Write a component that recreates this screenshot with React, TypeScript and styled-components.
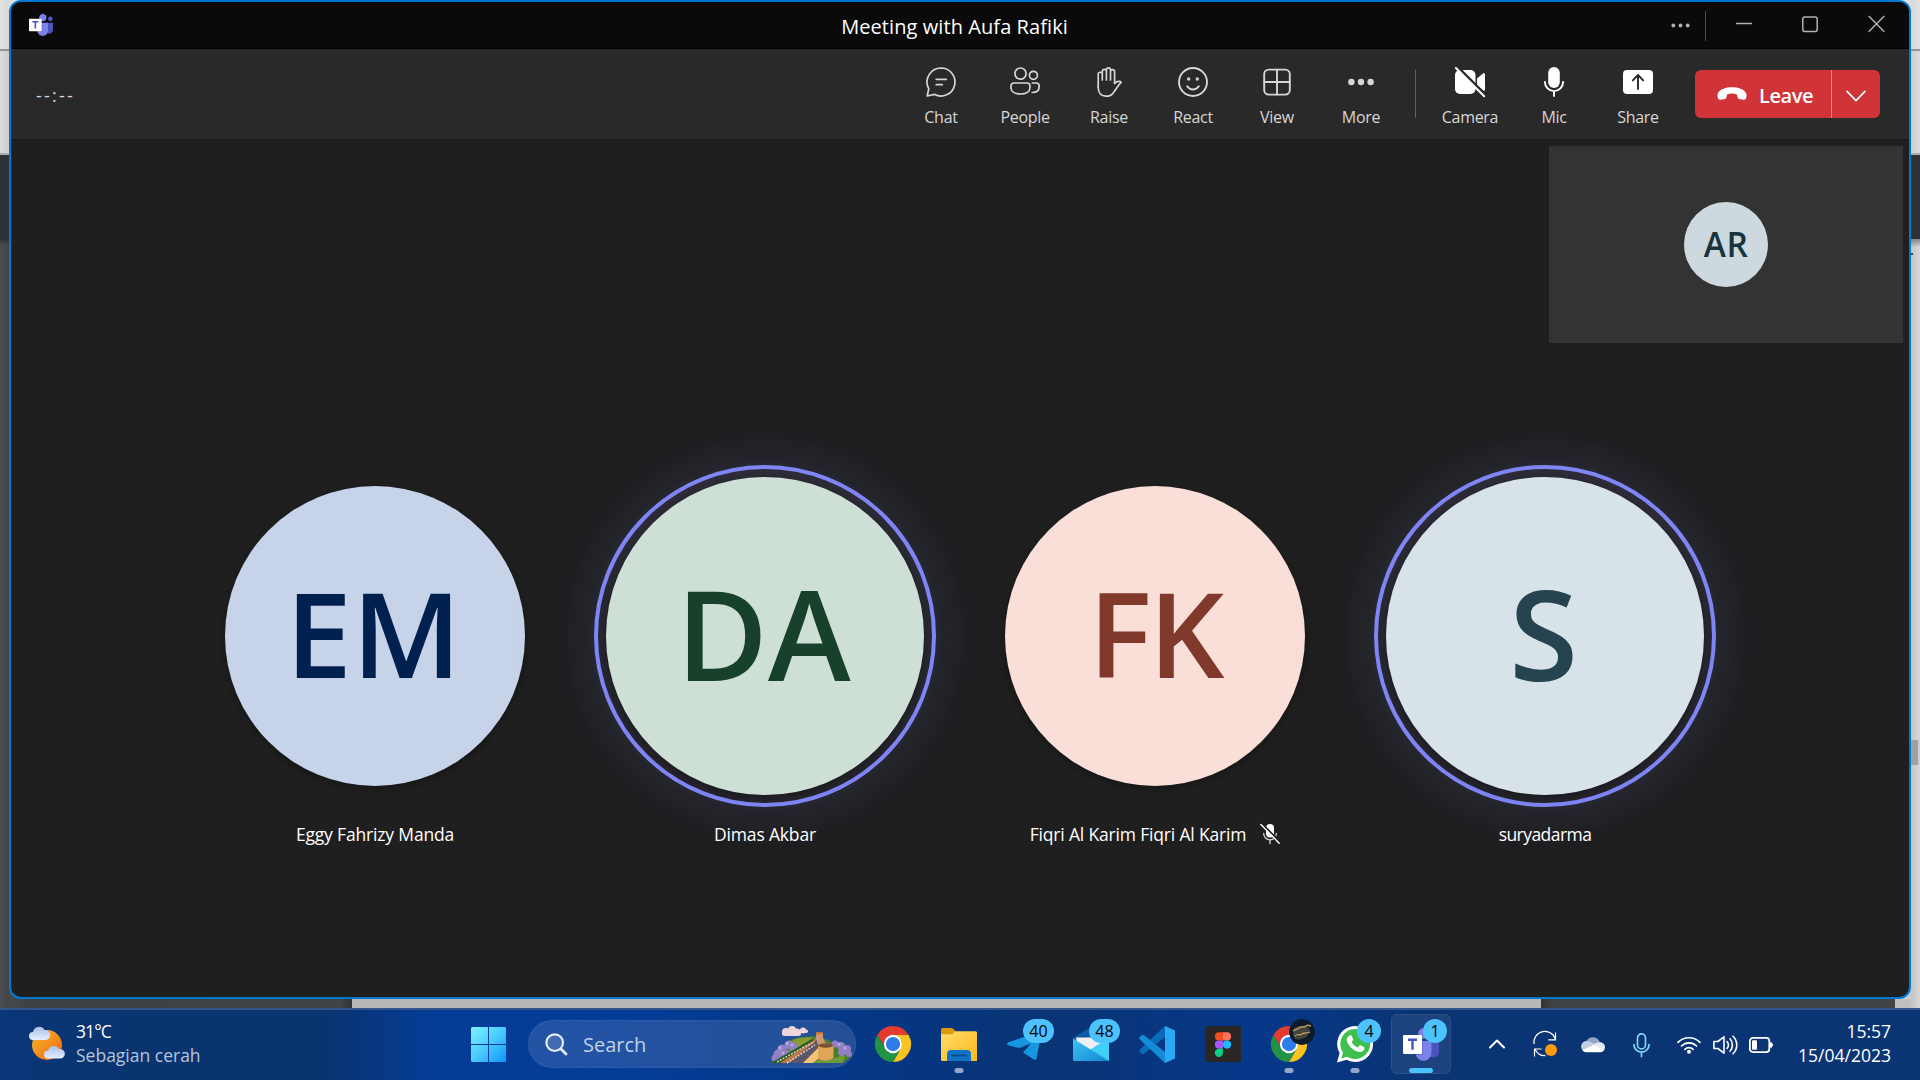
import React from "react";
import styled, { createGlobalStyle, css } from "styled-components";

const UI_FONT = `"Open Sans", "Noto Sans", sans-serif`;

const GlobalStyle = createGlobalStyle`
  * { box-sizing: border-box; }
  html, body { margin: 0; padding: 0; background: #0b3572; overflow: hidden; }
  body { font-family: ${UI_FONT}; }
  svg { display: block; flex: none; overflow: visible; }
`;

/* ---------- desktop ---------- */

const Screen = styled.div`
  width: 1920px;
  height: 1080px;
  display: flex;
  flex-direction: column;
  overflow: hidden;
`;

const Desktop = styled.div`
  height: 1008px;
  display: grid;
  grid-template-columns: 9px 1902px 9px;
`;

const Strip = styled.div`
  display: flex;
  flex-direction: column;
`;

const Band = styled.div<{ $h?: number; $bg: string }>`
  ${(p) => (p.$h ? css`height: ${p.$h}px; flex: none;` : css`flex: 1;`)}
  background: ${(p) => p.$bg};
`;

const ScrollThumb = styled.div`
  width: 7px;
  height: 25px;
  background: #a0a0a0;
`;

const ScrollArrow = styled.div`
  width: 2px;
  height: 2px;
  margin-top: 14px;
  background: #45494c;
`;

const Middle = styled.div`
  display: flex;
  flex-direction: column;
  background: linear-gradient(90deg, transparent 50%, #cbcbcb 50%) 0 900px no-repeat,
    linear-gradient(#dedede 100px, #45494c 100px);
`;

const Below = styled.div`
  height: 9px;
  display: flex;
`;

const BelowPart = styled.div<{ $w?: number; $bg: string }>`
  ${(p) => (p.$w ? css`width: ${p.$w}px;` : css`flex: 1;`)}
  background: ${(p) => p.$bg};
`;

/* ---------- meeting window ---------- */

const Window = styled.div`
  height: 999px;
  border: 2px solid #0078d4;
  border-radius: 12px;
  background: #1f1f1f;
  display: flex;
  flex-direction: column;
  overflow: hidden;
`;

const TitleBar = styled.div`
  height: 47px;
  flex: none;
  background: #0a0a0a;
  border-bottom: 1px solid #000;
  display: grid;
  grid-template-columns: 1fr auto 1fr;
  align-items: center;
  padding: 0 24px 0 18px;
`;

const TitleLogo = styled.div`
  padding-bottom: 1px;
`;

const Title = styled.div`
  color: #fff;
  font-size: 20px;
  line-height: 26px;
  letter-spacing: 0.08px;
  padding-top: 3px;
  margin-left: -5px;
`;

const WindowControls = styled.div`
  display: flex;
  justify-content: flex-end;
  align-items: center;
  height: 46px;
  padding-bottom: 1px;
`;

const ControlDivider = styled.div`
  width: 1px;
  height: 30px;
  background: #4d4d4d;
  margin: 3px 30px 0 15px;
`;

const ControlGap = styled.div<{ $w: number }>`
  width: ${(p) => p.$w}px;
`;

const Toolbar = styled.div`
  height: 90px;
  flex: none;
  background: #292929;
  display: flex;
  padding: 0 29px 0 25px;
  box-shadow: 0 1px 1px #1a1a1a;
`;

const Timer = styled.div`
  flex: 1;
  color: #d6d6d6;
  font-size: 18px;
  line-height: 24px;
  letter-spacing: 2.2px;
  padding-top: 34px;
`;

const Tool = styled.div`
  width: 84px;
  padding-top: 18px;
  display: flex;
  flex-direction: column;
  align-items: center;
`;

const ToolLabel = styled.div`
  color: #d6d6d6;
  font-size: 16px;
  line-height: 22px;
  letter-spacing: -0.3px;
  margin-top: 9px;
`;

const ToolDivider = styled.div`
  width: 1px;
  height: 48px;
  background: #616161;
  margin: 21px 12px 0;
`;

const LeaveGroup = styled.div`
  display: flex;
  width: 185px;
  height: 48px;
  margin: 21px 0 0 15px;
  border-radius: 6px;
  background: #d13438;
  overflow: hidden;
`;

const LeaveMain = styled.div`
  width: 136px;
  display: flex;
  align-items: center;
  padding-left: 22px;
  gap: 12px;
`;

const LeaveText = styled.div`
  color: #fff;
  font-weight: 600;
  font-size: 20px;
  line-height: 26px;
  letter-spacing: -0.4px;
  padding-top: 3px;
`;

const LeaveMenu = styled.div`
  flex: 1;
  border-left: 1px solid #e38a8c;
  display: flex;
  align-items: center;
  justify-content: center;
  padding-top: 3px;
`;

const Stage = styled.div`
  flex: 1;
  position: relative;
  padding: 326px 169px 0;
`;

const SelfPreview = styled.div`
  position: absolute;
  top: 7px;
  right: 6px;
  width: 354px;
  height: 197px;
  background: #333;
  display: flex;
  align-items: center;
  justify-content: center;
`;

const SelfAvatar = styled.div`
  width: 84px;
  height: 85px;
  border-radius: 50%;
  background: #ced9df;
  color: #17343a;
  font-weight: 600;
  font-size: 33.5px;
  line-height: 84px;
  text-align: center;
  letter-spacing: 0.4px;
`;

const People = styled.div`
  display: grid;
  grid-template-columns: repeat(4, 390px);
`;

const Person = styled.div`
  display: flex;
  flex-direction: column;
  align-items: center;
`;

const Ring = styled.div<{ $on?: boolean }>`
  width: 342px;
  height: 342px;
  border-radius: 50%;
  display: flex;
  align-items: center;
  justify-content: center;
  ${(p) =>
    p.$on &&
    css`
      border: 4.5px solid #7f85f5;
      background: linear-gradient(#2c2b37, #25242b);
      box-shadow: 0 0 48px 4px rgba(127, 133, 245, 0.11), 0 0 110px 10px rgba(127, 110, 190, 0.05);
    `}
`;

const Avatar = styled.div<{ $bg: string; $fg: string; $big?: boolean; $tight?: boolean }>`
  width: ${(p) => (p.$big ? 318 : 300)}px;
  height: ${(p) => (p.$big ? 318 : 300)}px;
  flex: none;
  border-radius: 50%;
  background: ${(p) => p.$bg};
  color: ${(p) => p.$fg};
  display: flex;
  align-items: center;
  justify-content: center;
  font-weight: 600;
  font-size: ${(p) => (p.$big ? 125 : 118.5)}px;
  line-height: 1;
  letter-spacing: ${(p) => (p.$tight ? "-3px" : "0")};
  padding: 0 ${(p) => (p.$tight ? 0 : 3)}px 8px 0;
  box-shadow: 0 3px 7px rgba(0, 0, 0, 0.3);
`;

const NameRow = styled.div`
  display: flex;
  align-items: center;
  gap: 14px;
  height: 24px;
  margin-top: 15px;
`;

const Name = styled.div<{ $tight?: boolean }>`
  color: #fff;
  font-size: 17.5px;
  line-height: 24px;
  letter-spacing: ${(p) => (p.$tight ? -0.55 : -0.17)}px;
  white-space: nowrap;
`;

/* ---------- taskbar ---------- */

const Taskbar = styled.div`
  height: 72px;
  flex: none;
  border-top: 2px solid #33558b;
  background: linear-gradient(
    90deg,
    #0a3778 0,
    #0a3470 130px,
    #0a3470 330px,
    #043c96 430px,
    #043c98 600px,
    #053786 860px,
    #0a3474 1050px,
    #06388a 1260px,
    #0a3473 1420px,
    #0a3474 1920px
  );
  display: flex;
  align-items: center;
`;

const Weather = styled.div`
  width: 449px;
  padding-left: 29px;
  display: flex;
  align-items: center;
  gap: 11px;
`;

const WeatherText = styled.div`
  display: flex;
  flex-direction: column;
  color: #b7c5da;
  font-size: 17.5px;
  line-height: 24px;
  padding-bottom: 4px;
`;

const Degrees = styled.div`
  color: #fff;
  letter-spacing: -0.9px;
`;

const StartButton = styled.div`
  width: 79px;
  display: flex;
  justify-content: center;
  padding: 0 0 1px;
`;

const SearchPill = styled.div`
  width: 328px;
  height: 48px;
  margin: 0 1px 2px 0;
  border-radius: 24px;
  background: rgba(255, 255, 255, 0.12);
  border: 1px solid rgba(255, 255, 255, 0.05);
  display: flex;
  align-items: center;
  padding: 0 2px 0 16px;
`;

const SearchText = styled.div`
  flex: 1;
  color: #c3d0e6;
  font-size: 20px;
  line-height: 28px;
  padding: 1px 0 0 15px;
`;

const Apps = styled.div`
  display: flex;
  gap: 6px;
  padding-left: 6px;
`;

const AppTile = styled.div<{ $active?: boolean }>`
  position: relative;
  width: 60px;
  height: 60px;
  margin-bottom: 2px;
  border-radius: 6px;
  display: flex;
  align-items: center;
  justify-content: center;
  ${(p) =>
    p.$active &&
    css`
      background: rgba(255, 255, 255, 0.08);
      border: 1px solid rgba(255, 255, 255, 0.07);
    `}
`;

const Indicator = styled.div<{ $wide?: boolean }>`
  position: absolute;
  left: 50%;
  bottom: ${(p) => (p.$wide ? 0 : 1)}px;
  transform: translateX(-50%);
  width: ${(p) => (p.$wide ? 24 : 9)}px;
  height: 5px;
  border-radius: 3px;
  background: ${(p) => (p.$wide ? "#4cc2ff" : "#94a7c9")};
`;

const Badge = styled.div<{ $wide?: boolean; $active?: boolean }>`
  position: absolute;
  top: ${(p) => (p.$active ? 4 : 5)}px;
  left: ${(p) => (p.$wide ? 28 : p.$active ? 31 : 32)}px;
  width: ${(p) => (p.$wide ? 31 : 24)}px;
  height: 24px;
  border-radius: 12px;
  background: #4cc2ff;
  color: #000;
  font-size: 16px;
  line-height: 25px;
  text-align: center;
`;

const ProfilePic = styled.div`
  position: absolute;
  top: 5px;
  left: 30px;
  width: 26px;
  height: 26px;
  border-radius: 50%;
  overflow: hidden;
`;

const Tray = styled.div`
  flex: 1;
  display: flex;
  align-items: center;
  padding: 0 29px 1px 38px;
`;

const TrayCell = styled.div<{ $w: number }>`
  width: ${(p) => p.$w}px;
  display: flex;
  justify-content: center;
`;

const Clock = styled.div`
  flex: 1;
  color: #fff;
  font-size: 17.5px;
  line-height: 24px;
  text-align: right;
  padding-bottom: 3px;
`;

/* ---------- icons ---------- */

const line = { fill: "none", stroke: "#d6d6d6", strokeWidth: 1.7, strokeLinecap: "round", strokeLinejoin: "round" } as const;

const ChatIcon = () => (
  <svg width="30" height="30" viewBox="0 0 30 30" {...line}>
    <path d="M15 1A14 14 0 1 1 8.3 27.3L1.2 29l1.6-7.2A14 14 0 0 1 15 1Z" />
    <path d="M10.3 12.3h10M10.3 17.7h6" strokeWidth="1.8" />
  </svg>
);

const PeopleIcon = () => (
  <svg width="30" height="30" viewBox="0 0 30 30" {...line}>
    <circle cx="10.5" cy="6.6" r="5.6" />
    <circle cx="23.4" cy="8.3" r="4" />
    <path d="M4 16h13a3 3 0 0 1 3 3v1.5c0 4-4 6.500-9.500 6.500S1 24.500 1 20.500V19a3 3 0 0 1 3-3Z" />
    <path d="M22.300 16h4a2.800 2.800 0 0 1 2.800 2.800v1.200c0 3.600-2.900 5.500-6.900 5.500" />
  </svg>
);

const HandIcon = () => (
  <svg width="26" height="30" viewBox="0 0 26 30" {...line}>
    <path d="M2.200 20V7.300a2.050 2.050 0 0 1 4.100 0V13M6.300 12V4.500a2.050 2.050 0 0 1 4.100 0V13M10.400 12V2.900a2.050 2.050 0 0 1 4.100 0V13M14.500 12V4.700a2.050 2.050 0 0 1 4.100 0V16.300" />
    <path d="M18.600 16.300c2.200-2.300 5.300-2.600 6.600-1-3 2.500-4.500 6-7.300 9.700-1.800 2.600-3.300 4.200-6 4.200H9.700C5 29.200 2.200 25.500 2.200 20" />
  </svg>
);

const SmileIcon = () => (
  <svg width="30" height="30" viewBox="0 0 30 30" {...line}>
    <circle cx="15" cy="15" r="14" strokeWidth="1.900" />
    <circle cx="10.700" cy="12" r="1.700" fill="#d6d6d6" stroke="none" />
    <circle cx="19.300" cy="12" r="1.700" fill="#d6d6d6" stroke="none" />
    <path d="M9.200 19.300c3 4.300 8.600 4.300 11.600 0" strokeWidth="2" />
  </svg>
);

const GridIcon = () => (
  <svg width="30" height="30" viewBox="0 0 30 30" {...line} strokeWidth={1.9}>
    <rect x="2.200" y="2.600" width="25.600" height="25" rx="4.500" />
    <path d="M15 2.600v25M2.200 15h25.600" />
  </svg>
);

const MoreIcon = () => (
  <svg width="30" height="30" viewBox="0 0 30 30" fill="#d6d6d6">
    <circle cx="5.400" cy="15" r="3.200" />
    <circle cx="15" cy="15" r="3.200" />
    <circle cx="24.600" cy="15" r="3.200" />
  </svg>
);

const CameraOffIcon = () => (
  <svg width="30" height="30" viewBox="0 0 30 30">
    <rect x="0" y="3" width="20.500" height="24" rx="5" fill="#fff" />
    <path d="M22 11.500 28 6.600c.9-.7 2-.2 2 1v14.800c0 1.200-1.100 1.700-2 1L22 18.500Z" fill="#fff" />
    <path d="M2.500 0 31.500 29" stroke="#292929" strokeWidth="3" />
    <path d="M0.900 1 29.200 29.300" stroke="#fff" strokeWidth="2" strokeLinecap="round" />
  </svg>
);

const MicIcon = () => (
  <svg width="22" height="30" viewBox="0 0 22 30">
    <rect x="5.200" y="0" width="11.600" height="21" rx="5.800" fill="#fff" />
    <path d="M1.900 15a9.100 9.100 0 0 0 18.200 0M11 24.300v4.700" fill="none" stroke="#fff" strokeWidth="1.900" strokeLinecap="round" />
  </svg>
);

const ShareIcon = () => (
  <svg width="30" height="30" viewBox="0 0 30 30">
    <rect x="0" y="3" width="30" height="24" rx="4" fill="#fff" />
    <path d="M15 22V8.500M9.800 13.300 15 8l5.200 5.300" fill="none" stroke="#292929" strokeWidth="1.900" strokeLinecap="round" strokeLinejoin="round" />
  </svg>
);

const HangupIcon = () => (
  <svg width="30" height="14" viewBox="0 0 30 14">
    <path d="M15 0.300c6.500 0 11.700 2 13.700 5.300 1.200 2 .9 4.600.2 6-.5 1-1.500 1.300-2.500 1.100l-4-.7c-1-.2-1.700-.9-1.900-1.900l-.5-2.700c-3.200-1.100-6.800-1.100-10 0l-.5 2.700c-.2 1-.9 1.700-1.900 1.900l-4 .7c-1 .2-2-.1-2.500-1.100-.7-1.400-1-4 .2-6C3.300 2.300 8.500.3 15 .3Z" fill="#fff" />
  </svg>
);

const MutedIcon = () => (
  <svg width="20" height="20" viewBox="0 0 20 20">
    <rect x="6" y="0" width="8" height="13.500" rx="4" fill="#fff" />
    <path d="M3.700 9.500a6.300 6.300 0 0 0 12.600 0M10 16v3.500" fill="none" stroke="#d6d6d6" strokeWidth="1.300" strokeLinecap="round" />
    <path d="M2.300 0 20.500 18.200" stroke="#1f1f1f" strokeWidth="1.800" />
    <path d="M0.900 0.600 19.200 19.200" stroke="#fff" strokeWidth="1.400" strokeLinecap="round" />
  </svg>
);

const TeamsLogo = ({ w, h }: { w: number; h: number }) => (
  <svg width={w} height={h} viewBox="0 0 36 33">
    <circle cx="32" cy="7.300" r="3.400" fill="#5059c9" />
    <path d="M25 13h11v11a5.500 5.500 0 0 1-8 4.800Z" fill="#4b53bc" />
    <circle cx="20.700" cy="5.400" r="5.400" fill="#7b83eb" />
    <path d="M13 13h15.500v12a8 8 0 0 1-15.500 2.500Z" fill="#7b83eb" />
    <path d="M13 13h7v14h-7Z" fill="#5b62c8" opacity=".6" />
    <rect x="0" y="7" width="19" height="19" rx="1.200" fill="#fff" />
    <path d="M5 11.700h9M9.500 11.700v10" stroke="#4b53bc" strokeWidth="2.400" fill="none" />
  </svg>
);

const ChromeLogo = () => {
  const wedge = "M24 12H44.800A24 24 0 0 0 3.200 12L13.600 30A12 12 0 0 1 24 12Z";
  return (
    <svg width="36" height="36" viewBox="0 0 48 48">
      <path d={wedge} fill="#e33b2e" />
      <path d={wedge} fill="#fcc31e" transform="rotate(120 24 24)" />
      <path d={wedge} fill="#229342" transform="rotate(240 24 24)" />
      <circle cx="24" cy="24" r="12.200" fill="#fff" />
      <circle cx="24" cy="24" r="9.500" fill="#2f7de9" />
    </svg>
  );
};

const WeatherIcon = () => (
  <svg width="36" height="33" viewBox="0 0 36 33">
    <defs>
      <linearGradient id="sun" x1="0" y1="0" x2="1" y2="1">
        <stop offset="0" stopColor="#f7b82d" />
        <stop offset="1" stopColor="#f0660f" />
      </linearGradient>
      <linearGradient id="cloud" x1="0" y1="0" x2="0" y2="1">
        <stop offset="0" stopColor="#a9bfea" />
        <stop offset="1" stopColor="#e6effc" />
      </linearGradient>
    </defs>
    <circle cx="18" cy="16" r="15" fill="url(#sun)" />
    <path d="M4 11a4 4 0 0 1 0-8 6.200 6.200 0 0 1 11.500-2A5 5 0 0 1 17 11Z" fill="url(#cloud)" />
    <path d="M19 29.500a3.900 3.900 0 0 1 0-8 6 6 0 0 1 11-1.500 4.800 4.800 0 0 1 2 9.500Z" fill="url(#cloud)" />
  </svg>
);

const WindowsLogo = () => (
  <svg width="35" height="35" viewBox="0 0 35 35">
    <defs>
      <linearGradient id="win" x1="0" y1="0" x2="35" y2="35" gradientUnits="userSpaceOnUse">
        <stop offset="0" stopColor="#7cf3ff" />
        <stop offset=".5" stopColor="#4bcbfb" />
        <stop offset="1" stopColor="#0a94fb" />
      </linearGradient>
    </defs>
    <g fill="url(#win)">
      <path d="M1.500 0H17v17H0V1.500A1.500 1.500 0 0 1 1.500 0Z" />
      <path d="M18 0h15.500A1.500 1.500 0 0 1 35 1.500V17H18Z" />
      <path d="M0 18h17v17H1.500A1.500 1.500 0 0 1 0 33.500Z" />
      <path d="M18 18h17v15.500a1.500 1.500 0 0 1-1.500 1.500H18Z" />
    </g>
  </svg>
);

const SearchIcon = () => (
  <svg width="23" height="23" viewBox="0 0 23 23" fill="none" stroke="#e6ecf6" strokeLinecap="round">
    <circle cx="9.700" cy="9.700" r="8.300" strokeWidth="2.200" fill="rgba(255,255,255,.15)" />
    <path d="M16 16l5 5" strokeWidth="2.800" />
  </svg>
);

const WallPicture = () => (
  <svg width="82" height="37" viewBox="0 0 82 37">
    <g fill="#edd5da">
      <circle cx="15" cy="6" r="4" />
      <circle cx="21" cy="4" r="4" />
      <circle cx="26" cy="6" r="3.500" />
      <rect x="11" y="5" width="19" height="5" rx="2.500" />
      <circle cx="32" cy="4.500" r="3" />
      <rect x="28" y="3.500" width="9" height="3.500" rx="1.700" />
    </g>
    <path d="M20 14c8-4 18-3 24-4l14 4 18 13 4 4-8 6H0l8-12Z" fill="#4a7d2c" />
    <path d="M22 14c8-3 14-2 20-3l-10 10-14 6Z" fill="#8c9a33" />
    <g fill="#9180c4">
      <circle cx="18" cy="19" r="4.500" />
      <circle cx="11" cy="23" r="4.500" />
      <circle cx="7" cy="28" r="4.500" />
      <circle cx="23" cy="21" r="4" />
      <circle cx="15" cy="28" r="4" />
      <circle cx="4" cy="32" r="3.500" />
      <circle cx="64" cy="18" r="3.500" />
      <circle cx="70" cy="20" r="4" />
      <circle cx="76" cy="23" r="4" />
      <circle cx="71" cy="26" r="4" />
      <circle cx="78" cy="28" r="3" />
    </g>
    <g fill="#b8a8de">
      <circle cx="16" cy="17.500" r="1.800" />
      <circle cx="9" cy="22" r="1.800" />
      <circle cx="21" cy="19" r="1.500" />
      <circle cx="12" cy="27" r="1.500" />
      <circle cx="68" cy="18" r="1.600" />
      <circle cx="74" cy="22" r="1.600" />
    </g>
    <path d="M0 37 41 13l3 3L26 37Z" fill="#245c20" />
    <path d="M9 37 42 15l5-6 5 12-22 16Z" fill="#c7743f" />
    <path d="M17 37 43 17l5-7 2 10-15 17Z" fill="#5c5566" />
    <path d="M6 36 43 15.500M16 37 44 19" stroke="#cfcbd2" strokeWidth="1.600" strokeDasharray="2 1.200" fill="none" />
    <path d="M32 37 47 22v11l-5 4Z" fill="#f4c176" />
    <path d="M45 7h7v5l4 7h-9l-2-6Z" fill="#c99a78" />
    <path d="M45 7.500h7" stroke="#d97a35" strokeWidth="2.500" />
    <path d="M43 37c4-5 10-4 16-4s10-4 15-3l-2 7Z" fill="#6f9a35" />
    <path d="M47 19c4-2 11-2 15.500 0v13c-4 3-11 3-15.500 1Z" fill="#e0a557" />
    <ellipse cx="54.700" cy="19.500" rx="7.700" ry="2.200" fill="#7b5138" />
  </svg>
);

const FolderIcon = () => (
  <svg width="36" height="33" viewBox="0 0 36 33">
    <defs>
      <linearGradient id="fold" x1="0" y1="0" x2="1" y2="1">
        <stop offset="0" stopColor="#ffdc6e" />
        <stop offset="1" stopColor="#fbb91c" />
      </linearGradient>
    </defs>
    <path d="M0 1.500A1.500 1.500 0 0 1 1.500 0H10c1 0 1.700.3 2.400 1L15 3.500v5H0Z" fill="#dc9a06" />
    <path d="M0 6.200h11l3.500-3H34.500A1.500 1.500 0 0 1 36 4.700V33H1.500A1.500 1.500 0 0 1 0 31.500Z" fill="url(#fold)" />
    <path d="M6 33v-7a4 4 0 0 1 4-4h16a4 4 0 0 1 4 4v7Z" fill="#0f74c8" />
    <path d="M11 27.500h14" stroke="#0a4d92" strokeWidth="1.800" strokeLinecap="round" />
  </svg>
);

const TelegramIcon = () => (
  <svg width="36" height="36" viewBox="0 0 36 36">
    <path d="M1 16.500 35 4.500 29.500 32.500c-.4 1.500-1.500 1.800-2.600 1L16 26.500l8-9-12 4.500L1 19.200c-1.200-.7-1.200-2 0-2.700Z" fill="#1696e0" />
  </svg>
);

const MailIcon = () => (
  <svg width="36" height="34" viewBox="0 0 36 34">
    <defs>
      <linearGradient id="mail" x1="0" y1="0" x2="1" y2="1">
        <stop offset="0" stopColor="#3cc4f2" />
        <stop offset="1" stopColor="#1687d4" />
      </linearGradient>
    </defs>
    <path d="M0 11 18 0l18 11v10H0Z" fill="#0a5aa8" />
    <path d="M3 10.500h30V20L18 25 4 17Z" fill="#efeff2" />
    <path d="M36 11v21.500a1.500 1.500 0 0 1-1.500 1.500H1.500L18 22Z" fill="#3fd0f5" />
    <path d="M0 11.500 36 34H1.500A1.500 1.500 0 0 1 0 32.500Z" fill="url(#mail)" />
  </svg>
);

const CodeIcon = () => (
  <svg width="36" height="37" viewBox="0 0 36 37">
    <path d="M26 0 0.800 23.500c-.8.700-.8 1.700 0 2.400l2 1.900c.6.500 1.400.6 2 .1L26 11Z" fill="#0a6cb8" />
    <path d="M26 37 0.800 13.500c-.8-.7-.8-1.700 0-2.400l2-1.900c.6-.5 1.400-.6 2-.1L26 26Z" fill="#148bd6" />
    <path d="M26 0 36 4.500V32.500L26 37Z" fill="#2aa9f5" />
  </svg>
);

const FigmaIcon = () => (
  <svg width="36" height="36" viewBox="0 0 36 36">
    <rect width="36" height="36" rx="2.500" fill="#2a2624" />
    <path d="M18 6.300h-4a4.100 4.100 0 0 0 0 8.200h4Z" fill="#f24e1e" />
    <path d="M18 6.300h4a4.100 4.100 0 0 1 0 8.200h-4Z" fill="#ff7262" />
    <path d="M18 14.500h-4a4.100 4.100 0 0 0 0 8.200h4Z" fill="#a259ff" />
    <circle cx="22" cy="18.600" r="4.100" fill="#1abcfe" />
    <path d="M18 22.700h-4a4.100 4.100 0 1 0 4 4.100Z" fill="#0acf83" />
  </svg>
);

const WhatsAppIcon = () => (
  <svg width="36" height="36" viewBox="0 0 36 36">
    <path d="M18 0A18 18 0 1 1 9.500 33.800L0 36.500 2.600 27A18 18 0 0 1 18 0Z" fill="#fff" />
    <path d="M18 3a15 15 0 1 1-7.800 27.700L4.400 32.200 6 26.500A15 15 0 0 1 18 3Z" fill="#3ec04f" />
    <path d="M12.500 9.500c.6-.6 1.600-.5 2 .2l1.600 3.300c.2.500.1 1-.3 1.400l-1.200 1.500c1.400 2.700 3.300 4.400 6 5.600l1.700-1.800c.4-.4 1-.5 1.400-.3l3.200 1.700c.6.300.8.900.6 1.500-.6 2.200-2.600 3.600-4.700 3.400C16.500 25.300 10.500 19 9.800 13.900c-.2-1.700.9-3.300 2.700-4.400Z" fill="#fff" />
  </svg>
);

const ProfileArt = () => (
  <svg width="26" height="26" viewBox="0 0 26 26">
    <circle cx="13" cy="13" r="13" fill="#0c1a2c" />
    <path d="M5 9c3-2 9-3 14-1l2 4-3 5c-3 3-8 4-12 3l-2-4Z" fill="#6a6148" opacity=".6" />
    <path d="M4 12c2-2 4-1 6-3s5 0 7-2 3 0 5 0M6 17c3-3 5 0 7-2s5 0 8-2" stroke="#b79a5c" strokeWidth="1.400" fill="none" />
  </svg>
);

const SyncIcon = () => (
  <svg width="24" height="25" viewBox="0 0 24 25" fill="none" stroke="#fff" strokeWidth="1.200">
    <path d="M1 12A11 11 0 0 1 22.500 7.500M22.500 0.500v7.300h-7.300M12.500 23.700A11 11 0 0 1 2 17M1.500 24.500V17h7" />
    <circle cx="18" cy="18" r="6" fill="#ff9a0d" stroke="none" />
  </svg>
);

const CloudIcon = () => (
  <svg width="24" height="17" viewBox="0 0 24 17">
    <path d="M5.500 5A7.300 7.300 0 0 1 18.800 6l-6 5Z" fill="#93a5c6" />
    <path d="M5.300 16A5.400 5.400 0 0 1 6 4.900c2 0 3.600.8 5 1.700L17 10 6 16Z" fill="#c6d0e3" />
    <path d="M12 9.500a8 8 0 0 1 7-3.200A5 5 0 0 1 19 16.300L10 13Z" fill="#e4eaf4" />
    <path d="M5.300 16.300a5.300 5.300 0 0 1-4-2L12.500 9 23 14.200a5 5 0 0 1-4 2.100Z" fill="#fff" />
  </svg>
);

const TrayMic = () => (
  <svg width="17" height="24" viewBox="0 0 17 24" fill="none" stroke="#7fd6f5" strokeWidth="1.700" strokeLinecap="round">
    <rect x="4.500" y="0.900" width="8" height="15" rx="4" />
    <path d="M0.900 11.500a7.600 7.600 0 0 0 15.200 0M8.500 19.500v4" />
  </svg>
);

const WifiIcon = () => (
  <svg width="24" height="18" viewBox="0 0 24 18" fill="none" stroke="#fff" strokeWidth="1.700" strokeLinecap="round">
    <path d="M1 6.300a15.600 15.600 0 0 1 22 0M4.500 10a10.600 10.600 0 0 1 15 0M7.900 13.400a5.800 5.800 0 0 1 8.200 0" />
    <circle cx="12" cy="15.700" r="2" fill="#fff" stroke="none" />
  </svg>
);

const SpeakerIcon = () => (
  <svg width="24" height="20" viewBox="0 0 24 20" fill="none" stroke="#fff" strokeWidth="1.600" strokeLinecap="round" strokeLinejoin="round">
    <path d="M0.900 6.500h4L11 1.800v16.400L4.900 13.500h-4Z" />
    <path d="M14 6.500c1.700 2 1.700 5 0 7M17 3.800c3.200 3.600 3.200 8.800 0 12.400M20 1.200c5 5 5 12.600 0 17.600" />
  </svg>
);

const BatteryIcon = () => (
  <svg width="24" height="16" viewBox="0 0 24 16">
    <rect x="0.900" y="0.900" width="19.400" height="14.200" rx="3" fill="none" stroke="#fff" strokeWidth="1.800" />
    <rect x="3" y="3.200" width="5" height="9.600" rx="1" fill="#fff" />
    <path d="M21.500 5.500c2.500.2 2.500 4.800 0 5Z" fill="#fff" stroke="#fff" />
  </svg>
);

const tools = [
  { label: "Chat", icon: <ChatIcon /> },
  { label: "People", icon: <PeopleIcon /> },
  { label: "Raise", icon: <HandIcon /> },
  { label: "React", icon: <SmileIcon /> },
  { label: "View", icon: <GridIcon /> },
  { label: "More", icon: <MoreIcon /> },
];

const devices = [
  { label: "Camera", icon: <CameraOffIcon /> },
  { label: "Mic", icon: <MicIcon /> },
  { label: "Share", icon: <ShareIcon /> },
];

const people = [
  { initials: "EM", name: "Eggy Fahrizy Manda", bg: "#c7d3e8", fg: "#002050" },
  { initials: "DA", name: "Dimas Akbar", bg: "#cee0d6", fg: "#17412a", speaking: true },
  { initials: "FK", name: "Fiqri Al Karim Fiqri Al Karim", bg: "#fadfd9", fg: "#80392b", muted: true, tightInitials: true },
  { initials: "S", name: "suryadarma", bg: "#d7e3e8", fg: "#25444f", speaking: true, tightName: true },
];

export default function App() {
  return (
    <Screen>
      <GlobalStyle />
      <Desktop>
        <Strip>
          <Band $h={49} $bg="linear-gradient(90deg,#e2e2e2,#d6d6d6)" />
          <Band $h={2} $bg="#929292" />
          <Band $h={102} $bg="linear-gradient(90deg,#dcdcdc,#cccccc)" />
          <Band $h={2} $bg="#a9aaaa" />
          <Band $h={84} $bg="#2d3236" />
          <Band $bg="linear-gradient(#2d3236,transparent 6px),linear-gradient(90deg,#4a4e51,#414547)" />
        </Strip>
        <Middle>
          <Window>
            <TitleBar>
              <TitleLogo>
                <TeamsLogo w={24} h={22} />
              </TitleLogo>
              <Title>Meeting with Aufa Rafiki</Title>
              <WindowControls>
                <svg width="19" height="5" viewBox="0 0 19 5" fill="#b3b3b3">
                  <circle cx="2.300" cy="3.500" r="1.900" />
                  <circle cx="9.500" cy="3.500" r="1.900" />
                  <circle cx="16.700" cy="3.500" r="1.900" />
                </svg>
                <ControlDivider />
                <svg width="16" height="16" viewBox="0 0 16 16" stroke="#b3b3b3" strokeWidth="1.500">
                  <path d="M0 6.500h16" />
                </svg>
                <ControlGap $w={50} />
                <svg width="16" height="16" viewBox="0 0 16 16" fill="none" stroke="#b3b3b3" strokeWidth="1.500">
                  <rect x="0.800" y="0.100" width="14.400" height="14.400" rx="2" />
                </svg>
                <ControlGap $w={50} />
                <svg width="17" height="17" viewBox="0 0 17 17" stroke="#b3b3b3" strokeWidth="1.400">
                  <path d="M0.700 0 16.300 15.800M16.300 0 0.700 15.800" />
                </svg>
              </WindowControls>
            </TitleBar>
            <Toolbar>
              <Timer>--:--</Timer>
              {tools.map((t) => (
                <Tool key={t.label}>
                  {t.icon}
                  <ToolLabel>{t.label}</ToolLabel>
                </Tool>
              ))}
              <ToolDivider />
              {devices.map((t) => (
                <Tool key={t.label}>
                  {t.icon}
                  <ToolLabel>{t.label}</ToolLabel>
                </Tool>
              ))}
              <LeaveGroup>
                <LeaveMain>
                  <HangupIcon />
                  <LeaveText>Leave</LeaveText>
                </LeaveMain>
                <LeaveMenu>
                  <svg width="20" height="12" viewBox="0 0 20 12" fill="none" stroke="#fff" strokeWidth="1.700" strokeLinecap="round" strokeLinejoin="round">
                    <path d="M1 1.300 10 10.600 19 1.300" />
                  </svg>
                </LeaveMenu>
              </LeaveGroup>
            </Toolbar>
            <Stage>
              <SelfPreview>
                <SelfAvatar>AR</SelfAvatar>
              </SelfPreview>
              <People>
                {people.map((p) => (
                  <Person key={p.name}>
                    <Ring $on={p.speaking}>
                      <Avatar $bg={p.bg} $fg={p.fg} $big={p.speaking} $tight={p.tightInitials}>
                        {p.initials}
                      </Avatar>
                    </Ring>
                    <NameRow>
                      <Name $tight={p.tightName}>{p.name}</Name>
                      {p.muted && <MutedIcon />}
                    </NameRow>
                  </Person>
                ))}
              </People>
            </Stage>
          </Window>
          <Below>
            <BelowPart $w={343} $bg="linear-gradient(90deg,#45494c,#3d4143 20px,#404446 332px,#303233)" />
            <BelowPart $bg="#b8b8b8" />
            <BelowPart $w={354} $bg="linear-gradient(90deg,#303234,#404446 12px)" />
            <BelowPart $w={16} $bg="#c0c0c0" />
          </Below>
        </Middle>
        <Strip>
          <Band $h={49} $bg="linear-gradient(90deg,#d6d6d6,#e2e2e2)" />
          <Band $h={2} $bg="#929292" />
          <Band $h={102} $bg="linear-gradient(90deg,#cccccc,#dcdcdc)" />
          <Band $h={2} $bg="#a9aaaa" />
          <Band $h={84} $bg="#2d3236" />
          <Band $h={501} $bg="linear-gradient(rgba(80,80,80,.6),transparent 8px),linear-gradient(90deg,#c4c4c4,#d8d8d8)">
            <ScrollArrow />
          </Band>
          <Band $h={25} $bg="#cfcfcf">
            <ScrollThumb />
          </Band>
          <Band $bg="linear-gradient(90deg,#c4c4c4,#d8d8d8)" />
        </Strip>
      </Desktop>
      <Taskbar>
        <Weather>
          <WeatherIcon />
          <WeatherText>
            <Degrees>31°C</Degrees>
            <div>Sebagian cerah</div>
          </WeatherText>
        </Weather>
        <StartButton>
          <WindowsLogo />
        </StartButton>
        <SearchPill>
          <SearchIcon />
          <SearchText>Search</SearchText>
          <WallPicture />
        </SearchPill>
        <Apps>
          <AppTile>
            <ChromeLogo />
          </AppTile>
          <AppTile>
            <FolderIcon />
            <Indicator />
          </AppTile>
          <AppTile>
            <TelegramIcon />
            <Badge $wide>40</Badge>
          </AppTile>
          <AppTile>
            <MailIcon />
            <Badge $wide>48</Badge>
          </AppTile>
          <AppTile>
            <CodeIcon />
          </AppTile>
          <AppTile>
            <FigmaIcon />
          </AppTile>
          <AppTile>
            <ChromeLogo />
            <ProfilePic>
              <ProfileArt />
            </ProfilePic>
            <Indicator />
          </AppTile>
          <AppTile>
            <WhatsAppIcon />
            <Badge>4</Badge>
            <Indicator />
          </AppTile>
          <AppTile $active>
            <TeamsLogo w={36} h={33} />
            <Badge $active>1</Badge>
            <Indicator $wide />
          </AppTile>
        </Apps>
        <Tray>
          <TrayCell $w={16}>
            <svg width="16" height="11" viewBox="0 0 16 11" fill="none" stroke="#fff" strokeWidth="2" strokeLinecap="round" strokeLinejoin="round">
              <path d="M1 8.500 8 1.500 15 8.500" />
            </svg>
          </TrayCell>
          <TrayCell $w={80}>
            <SyncIcon />
          </TrayCell>
          <TrayCell $w={16}>
            <CloudIcon />
          </TrayCell>
          <TrayCell $w={80}>
            <TrayMic />
          </TrayCell>
          <TrayCell $w={16}>
            <WifiIcon />
          </TrayCell>
          <TrayCell $w={56}>
            <SpeakerIcon />
          </TrayCell>
          <TrayCell $w={16}>
            <BatteryIcon />
          </TrayCell>
          <Clock>
            <div>15:57</div>
            <div>15/04/2023</div>
          </Clock>
        </Tray>
      </Taskbar>
    </Screen>
  );
}
